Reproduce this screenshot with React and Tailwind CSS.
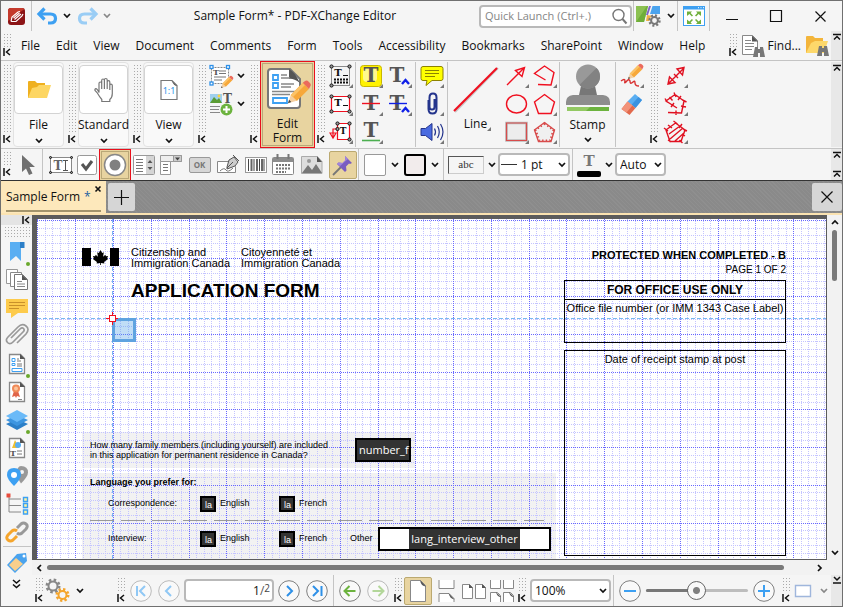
import { useState } from 'react';
import clsx from 'clsx';

const menus = ['File', 'Edit', 'View', 'Document', 'Comments', 'Form', 'Tools', 'Accessibility', 'Bookmarks', 'SharePoint', 'Window', 'Help'];

const Svg = ({ w = 24, h = w, vw = w, vh = h, children, className }) => (
    <svg width={w} height={h} viewBox={`0 0 ${vw} ${vh}`} fill="none" className={clsx('shrink-0 overflow-visible', className)} aria-hidden="true">{children}</svg>
);

const Chevron = ({ color = '#111', className }) => (
    <Svg w={8} h={6} className={className}><path d="M1 1l3 3 3-3" stroke={color} strokeWidth="1.7" /></Svg>
);

const Collapse = () => (
    <Svg w={8} h={8}><path d="M1 0v8M7 1L3.5 4 7 7" stroke="#111" strokeWidth="1.5" /></Svg>
);

// Drag handle with its collapse mark
const Grip = ({ className }) => (
    <div className={clsx('flex w-3 shrink-0 flex-col items-center self-stretch pb-1 pt-0.5', className)}>
        <div className="mb-px w-2 flex-1 bg-[radial-gradient(#aaa_0.8px,transparent_0.9px)] bg-[length:3px_3px]" />
        <Collapse />
    </div>
);

const Divider = () => <div className="w-px shrink-0 self-stretch bg-[#c4c4c4]" />;

// Narrow strip on the right end of every toolbar
const EndStrip = ({ children, className }) => (
    <div className={clsx('flex w-[11px] shrink-0 flex-col items-center self-stretch bg-[#e8e8e8]', className)}>{children}</div>
);
const UpMark = () => <Svg w={8} h={8}><path d="M0 1.5h8M1 6.5l3-3 3 3" stroke="#111" strokeWidth="1.5" /></Svg>;

const Tool = ({ label, className, children }) => (
    <button type="button" aria-label={label} className={clsx('flex shrink-0 items-center justify-center', className)}>{children}</button>
);

const Corner = () => <path d="M24 20v4h-4z" fill="#777" />;

const IconTool = ({ label, children, corner = true, className }) => (
    <Tool label={label} className={clsx('h-7', className)}>
        <Svg>{children}{corner && <Corner />}</Svg>
    </Tool>
);

const Pencil = ({ transform }) => (
    <g transform={transform}>
        <path d="M0 12l1.5-4.500 3.200 3.200z" fill="#f4cfa0" />
        <path d="M1.500 7.500L8 1l3.300 3.300-6.500 6.500z" fill="#f7a83a" />
        <path d="M1.500 7.500L8 1l1.200 1.200-6.500 6.500z" fill="#fbc368" />
        <path d="M8 1l1.200-1q1-.6 2 .4l.8.8q.8.900 0 1.800l-.7 1.300z" fill="#ec6a5c" />
        <path d="M0 12l.6-1.800 1.200 1.200z" fill="#444" />
    </g>
);

const BigT = ({ x = 12, y = 18, size = 20, color = '#555' }) => (
    <text x={x} y={y} fontSize={size} fontWeight="bold" fontFamily="DejaVu Serif, serif" textAnchor="middle" fill={color}>T</text>
);

const Handles = ({ pts, r = 1.6 }) => pts.map(([x, y]) => <circle key={`${x}-${y}`} cx={x} cy={y} r={r} fill="#999" stroke="#111" />);

const RibbonButton = ({ label, children }) => (
    <button type="button" className="mr-0.5 flex w-[51px] shrink-0 flex-col items-center self-stretch rounded-sm border border-[#e2e2e2] bg-[#f9f9f9] pt-0.5">
        <span className="flex h-[49px] w-[49px] items-center justify-center rounded-sm border border-[#d3d3d3] bg-white">{children}</span>
        <span className="mt-0.5 text-[12px] leading-[18px]">{label}</span>
        <Chevron className="mt-1" />
    </button>
);

const TitleBar = () => (
    <header className="flex h-[30px] shrink-0 items-center">
        <div className="flex w-[30px] justify-center">
            <Svg w={17}>
                <rect width="17" height="17" rx="3" fill="#8c1416" />
                <path d="M0 3q0-3 3-3h11q1.500 0 2.500 1L0 13z" fill="#c43a2c" />
                <path d="M3 13.500l1-4.500L10 4l2-.5M3 13.500h5l6-5.500 1-2" stroke="#fff" strokeWidth="1.200" />
                <path d="M5.500 10l6-5M6.500 11.500l6.500-5.500" stroke="#fff" strokeWidth="1.200" />
            </Svg>
        </div>
        <Divider />
        <Tool label="Undo" className="ml-[5px]">
            <Svg w={21} h={19}><path d="M7.500 1.500L2 7l5.500 5.500" stroke="#3da0f2" strokeWidth="3.200" /><path d="M3 7h10.500q5 0 5 4.500T13.500 16H11" stroke="#3da0f2" strokeWidth="3.200" /></Svg>
        </Tool>
        <Tool label="Undo list" className="ml-[5px]"><Chevron /></Tool>
        <Tool label="Redo" className="ml-1.5">
            <Svg w={21} h={19}><path d="M13.500 1.500L19 7l-5.500 5.500" stroke="#9acdf5" strokeWidth="3.200" /><path d="M18 7H7.500q-5 0-5 4.500T7.500 16H10" stroke="#9acdf5" strokeWidth="3.200" /></Svg>
        </Tool>
        <Tool label="Redo list" className="ml-[5px]"><Chevron color="#888" /></Tool>
        <h1 className="flex-1 text-center text-[12px] font-normal">Sample Form* - PDF-XChange Editor</h1>
        <label className="flex h-[23px] w-[153px] shrink-0 items-center rounded-sm border-2 border-[#b9b9b9] bg-white pl-1">
            <input type="text" aria-label="Quick Launch" placeholder="Quick Launch (Ctrl+.)" className="w-full min-w-0 flex-1 text-[11px] outline-none placeholder:text-[#858585]" />
            <Svg w={17} className="mr-0.5"><circle cx="7.500" cy="7" r="5.500" stroke="#777" strokeWidth="1.400" /><path d="M11.500 11l4 4.500" stroke="#777" strokeWidth="2" /></Svg>
        </label>
        <div className="ml-px flex self-stretch">
            <Divider />
            <Tool label="UI options" className="w-[43px] gap-1.5">
                <Svg w={25} h={22}>
                    <path d="M0 1h12l-4 16H0z" fill="#8cc152" /><path d="M0 17L11 1h1l-4 16z" fill="#70ae3a" />
                    <path d="M13 1h2l-3 9h-2z" fill="#8264c8" /><path d="M16.500 1H24v8H14z" fill="#4aa3ee" />
                    <path d="M11 10l6 1-1 5h-6z" fill="#f0b048" />
                    <circle cx="18.500" cy="15.500" r="5" fill="#f5f5f5" stroke="#777" strokeWidth="2.400" strokeDasharray="2 1.900" />
                    <circle cx="18.500" cy="15.500" r="3.400" stroke="#777" strokeWidth="2" />
                </Svg>
                <Chevron />
            </Tool>
            <Divider />
            <Tool label="Full screen" className="w-[31px]">
                <Svg w={22} h={20}>
                    <rect x=".5" y=".5" width="21" height="19" fill="#fff" stroke="#3da0f2" /><path d="M0 0h22v3.500H0z" fill="#3da0f2" />
                    <path d="M15 1.700h1M17.500 1.700h1M20 1.700h1" stroke="#fff" />
                    <path d="M4 5.500h5L7.600 7 10 9.400 8.900 10.500 6.400 8 4 10zM18 5.500h-5L14.400 7 12 9.400l1.100 1.100L15.600 8 18 10zM4 18h5l-1.400-1.500L10 14.100 8.900 13l-2.500 2.500L4 13.500zM18 18h-5l1.400-1.500-2.400-2.400 1.100-1.100 2.500 2.500 2.400-2z" fill="#70b03c" />
                </Svg>
            </Tool>
            <Divider />
        </div>
        <Tool label="Minimize" className="w-11"><Svg w={12}><path d="M0 9.500h12" stroke="#111" /></Svg></Tool>
        <Tool label="Maximize" className="w-11"><Svg w={12}><path d="M.5.500h11v11H.5z" stroke="#111" strokeWidth="1.200" /></Svg></Tool>
        <Tool label="Close" className="w-11"><Svg w={11}><path d="M.5.500l10 10M10.500.500l-10 10" stroke="#111" strokeWidth="1.200" /></Svg></Tool>
    </header>
);

const Binoculars = ({ transform }) => (
    <g transform={transform} fill="#777"><path d="M2 0h3v2h2V0h3l1 5 1 5H7V6H5v4H0l1-5z" /></g>
);

const MenuBar = () => (
    <div className="flex h-[30px] shrink-0 border-b border-[#c4c4c4]">
        <Grip />
        <nav className="ml-2 flex flex-1 items-center gap-4 text-[12px]">
            {menus.map((m) => <button key={m} type="button">{m}</button>)}
        </nav>
        <Grip />
        <button type="button" className="ml-0.5 flex items-center gap-[3px] text-[12px]">
            <Svg>
                <path d="M1.500 1.500h10l5 5v14h-15z" fill="#fff" stroke="#888" /><path d="M11 1.500l6 6h-6z" fill="#555" />
                <path d="M4 6.500h6M4 9.500h9M4 12.500h9M4 15.500h7" stroke="#888" /><Binoculars transform="translate(12 13)" />
            </Svg>
            Find...
        </button>
        <Tool label="Search" className="ml-1 mr-0.5">
            <Svg>
                <path d="M1 3q0-1 1-1h6l2 2h8v15H1z" fill="#f3b53b" /><path d="M6 9l4-2h13l-4 12H1z" fill="#fdd86b" /><Binoculars transform="translate(12 12)" />
            </Svg>
        </Tool>
        <EndStrip className="pt-0.5"><UpMark /></EndStrip>
    </div>
);

const Ribbon = () => (
    <div className="flex h-[88px] shrink-0 border-b border-[#c4c4c4] py-px">
        <Grip />
        <RibbonButton label="File">
            <Svg><path d="M1 4q0-1 1-1h6l2 2h8v4L8 20 1 20z" fill="#efb01f" /><path d="M5 10l5-1 2-2h12l-4 13H1z" fill="#fdd663" /></Svg>
        </RibbonButton>
        <Grip />
        <RibbonButton label="Standard">
            <Svg>
                <path d="M7 14.500V5.500q0-1.500 1.300-1.500t1.400 1.500V11 2.500Q9.700 1 11 1t1.400 1.500V11 2q0-1.500 1.400-1.500T15.200 2v9V4q0-1.400 1.300-1.400T17.800 4v8-4.500q0-1.300 1.200-1.300t1.300 1.300v8q0 4-2.500 6v2h-8v-2Q8 19.500 5 14.500L3 12.500Q2.500 11 4 10.700q1 0 3 3.800z" fill="#fff" stroke="#777" strokeWidth="1.200" />
            </Svg>
        </RibbonButton>
        <Grip />
        <RibbonButton label="View">
            <Svg><path d="M4 2.500h11l5 5v14H4z" stroke="#777" strokeWidth="1.200" /><path d="M14.500 2.500L20 8q-3 0-5.500-5.500z" fill="#555" /><text x="12" y="16" fontSize="9" textAnchor="middle" fill="#2d90e8" fontFamily="Noto Sans, sans-serif">1:1</text></Svg>
        </RibbonButton>
        <Grip />
        <div className="mr-0.5 flex w-[38px] shrink-0 flex-col">
            <Tool label="Edit text" className="h-7 gap-1">
                <Svg>
                    <path d="M2.500 3.500h17v16h-17z" fill="#fff" stroke="#888" strokeDasharray="2 1" />
                    <path d="M10 7h7M10 9.500h7M5 13h12M5 16h8" stroke="#777" /><BigT x={7} y={11} size={8} />
                    {[[2.5, 3], [19, 3], [2.5, 19.5]].map(([x, y]) => <rect key={x + y} x={x - 1.5} y={y - 1.5} width="3" height="3" fill="#fff" stroke="#2d90e8" strokeWidth="1.300" />)}
                    <Pencil transform="translate(12 12)" />
                </Svg>
                <Chevron />
            </Tool>
            <Tool label="Add content" className="h-7 gap-1">
                <Svg>
                    <path d="M1 2h12v9H1z" fill="#9fd0ee" /><path d="M1 11l4-6 3 3 2-2 3 5z" fill="#5a9c35" /><circle cx="10" cy="4" r="1.400" fill="#ffd33a" />
                    <BigT x={18.500} y={11} size={12} /><path d="M1 14.500h10M1 17.500h9M1 20.500h10" stroke="#888" />
                    <circle cx="17.500" cy="17.500" r="6" fill="#6cb33e" /><path d="M17.500 14v7M14 17.500h7" stroke="#fff" strokeWidth="2" />
                </Svg>
                <Chevron />
            </Tool>
        </div>
        <Grip />
        <button type="button" className="-my-px flex w-[55px] shrink-0 flex-col items-center border border-[#e8101c] bg-[#e8d4a0] pt-[5px] text-[12px] leading-[14px] outline -outline-offset-3 outline-[#b9a877]">
            <Svg w={46} h={46} className="ml-0.5">
                <path d="M2 5q0-3 3-3h19l10 10v26q0 3-3 3H5q-3 0-3-3z" fill="#fff" stroke="#777" strokeWidth="2" />
                <path d="M23 2q5 2 11 14-7-5-11-4z" fill="#555" />
                <path d="M7 8h5v5H7zM7 16h5v5H7zM7 31h14v5H7z" stroke="#3da0f2" strokeWidth="1.800" />
                <path d="M15 8h6M15 11h9M15 17h13M15 20h10M6 24.500h24M6 27.500h18" stroke="#888" strokeWidth="1.500" />
                <Pencil transform="translate(22 14) scale(1.850)" />
            </Svg>
            <span className="mt-1 block">Edit</span>
            <span className="block">Form</span>
        </button>
        <Grip />
        <div className="flex w-7 shrink-0 flex-col">
            <IconTool label="Text box">
                <rect x="2.500" y="2.500" width="18" height="19" stroke="#222" strokeDasharray="1 1" /><BigT x={9} y={12} size={10} color="#111" /><path d="M14 11.500h5" stroke="#111" />
                <path d="M5 15.500h14M5 18.500h14" stroke="#111" strokeWidth="2" strokeDasharray="2 1" /><Handles pts={[[2.5, 2.5], [20.5, 2.5], [2.5, 21.5]]} />
            </IconTool>
            <IconTool label="Typewriter">
                <path d="M2.500 4.500h18v15h-18z" fill="#fff" stroke="#f01020" strokeWidth="1.200" /><BigT x={9} y={14} size={10} color="#111" /><path d="M14 13.500h5" stroke="#111" />
                <Handles pts={[[2.5, 4.5], [20.5, 4.5], [2.5, 19.5], [20.5, 19.5]]} />
            </IconTool>
            <IconTool label="Callout">
                <path d="M8.500 3.500h12v16h-12z" fill="#fff" stroke="#f01020" strokeWidth="1.200" /><BigT x={14} y={14} size={9} color="#111" /><path d="M8 9H4v8M1 13l3 5 3-5z" stroke="#f01020" strokeWidth="1.200" />
                <Handles pts={[[8.5, 3.5], [20.5, 3.5], [8.5, 9], [20.5, 19.5]]} />
            </IconTool>
        </div>
        <Divider />
        <div className="grid w-[59px] shrink-0 grid-cols-2 content-start">
            <IconTool label="Highlight"><rect x="1.500" y="1.500" width="21" height="21" rx="3" fill="#fff200" stroke="#c9b800" /><rect x="4" y="4" width="14" height="14" rx="4" fill="#fff98c" /><BigT y={18} /></IconTool>
            <IconTool label="Replace text"><BigT x={9} /><path d="M14 20l3.500-4 3.500 4" stroke="#1020e8" strokeWidth="2.400" /></IconTool>
            <IconTool label="Strikeout"><BigT /><path d="M3 11.500h18" stroke="#f01020" strokeWidth="1.400" /></IconTool>
            <IconTool label="Insert text"><BigT x={9} /><path d="M1 11.500h18" stroke="#1020e8" strokeWidth="1.400" /><path d="M14 20l3.500-4 3.500 4" stroke="#1020e8" strokeWidth="2.400" /></IconTool>
            <IconTool label="Underline"><BigT y={17} /><path d="M3 20.500h18" stroke="#4caf50" strokeWidth="1.600" /></IconTool>
        </div>
        <Divider />
        <div className="flex w-[31px] shrink-0 flex-col">
            <IconTool label="Sticky note"><path d="M3 2.500h18q2 0 2 2v10q0 2-2 2H12l-6 5 1-5H3q-2 0-2-2v-10q0-2 2-2z" fill="#ffff00" stroke="#8d8200" /><path d="M5 6.500h14M5 9.500h14M5 12.500h10" stroke="#8d8200" /></IconTool>
            <IconTool label="File attachment"><path d="M8.500 8v9q0 4.500 4 4.500t4-4.500V5.500q0-4-3.500-4T9.500 5.500V15q0 2.500 2.500 2.500T14.500 15V7" stroke="#24348c" strokeWidth="2" /></IconTool>
            <IconTool label="Sound"><path d="M1 8.500h4.500l6.500-5v17l-6.500-5H1z" fill="#4a6be0" stroke="#24348c" /><path d="M14.500 8.500q2 3.500 0 7M17.500 6q3.500 6 0 12M20.500 4q5 8 0 16" stroke="#24348c" strokeWidth="1.200" /></IconTool>
        </div>
        <Divider />
        <button type="button" className="flex w-[55px] shrink-0 flex-col items-center text-[12px]">
            <Svg w={46} h={49} className="mt-0.5"><path d="M2 48L45 4" stroke="#c9c9c9" strokeWidth="2" /><path d="M1 47L44 4" stroke="#f01020" strokeWidth="2.200" /></Svg>
            <span className="mt-0.5 flex items-end pl-1 leading-[18px]">Line<Svg w={4} className="mb-0.5"><path d="M4 0v4H0z" fill="#777" /></Svg></span>
        </button>
        <div className="grid w-14 shrink-0 grid-cols-2 content-start">
            <IconTool label="Arrow"><path d="M2 21L19.500 3.500M10.500 6.500L19.500 3.500 17 12.500z" stroke="#f01020" strokeWidth="1.400" /></IconTool>
            <IconTool label="Polyline"><path d="M5 20.500l13 .500 3-12.500-9.500-6.500L1.500 9.500l11 6.500" stroke="#f01020" strokeWidth="1.400" /></IconTool>
            <IconTool label="Oval"><ellipse cx="11.500" cy="12" rx="10" ry="9" stroke="#f01020" strokeWidth="1.400" /></IconTool>
            <IconTool label="Polygon"><path d="M11.500 2.500L21.500 10l-3.500 11.500H5.500L1.500 10z" stroke="#f01020" strokeWidth="1.400" /></IconTool>
            <IconTool label="Rectangle"><path d="M1.500 3h20v17.500h-20z" fill="#ededed" stroke="#bbb" strokeWidth="2.600" /><path d="M1.500 3h20v17.500h-20z" stroke="#d84c4c" strokeWidth="1.200" /></IconTool>
            <IconTool label="Cloud">
                <path d="M11.500 2.500L21.500 10l-3.500 11.500H5.500L1.500 10z" fill="#f0f0f0" stroke="#d84c4c" strokeWidth="1.400" />
                <path d="M11.500 3.500L20.500 10l-3.300 10.500H6.300L2.500 10z" stroke="#d84c4c" strokeWidth="2.200" strokeDasharray="1.400 2.200" />
            </IconTool>
        </div>
        <Divider />
        <button type="button" className="flex w-[55px] shrink-0 flex-col items-center text-[12px]">
            <Svg w={44} h={48} className="mt-0.5">
                <path d="M15 22h14l2 9H13z" fill="#777" /><circle cx="22" cy="12.500" r="12" fill="#999" /><path d="M30.500 4a12 12 0 0 1-17 17z" fill="#828282" />
                <path d="M0 41v-3q0-6 7-7h30q7 1 7 7v3z" fill="#8d8d8d" /><path d="M1 43h42v4H1z" fill="#6cb33e" /><path d="M1 43h23l-4 4H1z" fill="#93c963" />
            </Svg>
            <span className="mt-1 leading-[18px]">Stamp</span>
            <Chevron className="mt-[3px]" />
        </button>
        <Divider />
        <div className="flex w-8 shrink-0 flex-col">
            <IconTool label="Pencil"><Pencil transform="translate(8 0) scale(1.250)" /><path d="M1 17q4-3 4 0-1 3 1 1 3-4 4-1 0 4 3 1 2-2 2 1t4 3" stroke="#d83030" strokeWidth="1.400" /></IconTool>
            <IconTool label="Eraser" corner={false}><path d="M15 2l7 6-6.500 8-8-6.500z" fill="#59aef2" /><path d="M18.500 5l3.500 3-6.500 8-4-3.200z" fill="#3a92e0" /><path d="M7.500 9.500l8 6.500-6 7L1.500 17z" fill="#e2694c" /><path d="M7.500 9.500l5 4-6 7-5-3.500z" fill="#f2937a" /></IconTool>
        </div>
        <Grip />
        <div className="ml-0.5 flex w-7 shrink-0 flex-col">
            <IconTool label="Distance"><path d="M4 20L20 4M13 5l7-1.500L18.500 11zM5.500 13L4 20l7-1.500zM10 10l4 4" stroke="#e01020" strokeWidth="1.400" /></IconTool>
            <IconTool label="Perimeter"><path d="M4 20.500l13.500.500 2.500-12-9-6.500L2 9l11 7M10 .500l2 4.500M18.500 8l4 2M1 6.500l2.500 4M5.500 5l3 3.500M14 8l3-4M17 14l5 1M12 18.500v4.500M7 15l3-4" stroke="#e01020" strokeWidth="1.400" /></IconTool>
            <IconTool label="Area"><path d="M11.500 3l9.500 7-4 11.500H6L2 10zM5 14l11-8M6 19L19 8M11 21l9-8M0 8l4 3M9.500 1l4 3M19 9l4 2M15.500 20l3 3M4 20l3 2M4 5l4 3M15 8l3-4M18 14l3 2" stroke="#e01020" strokeWidth="1.400" /></IconTool>
        </div>
        <div className="flex-1" />
        <EndStrip className="pt-0.5"><UpMark /></EndStrip>
    </div>
);

const SelectBox = ({ label, value, className, pad = 'pl-[3px]' }) => (
    <div className={clsx('relative flex h-[23px] shrink-0 items-center', className)}>
        <select aria-label={label} className={clsx('h-full w-full appearance-none rounded-sm border-2 border-[#b9b9b9] bg-white text-[12px] leading-none', pad)}>
            <option>{value}</option>
        </select>
        <Chevron className="pointer-events-none absolute right-1" />
    </div>
);

const FormToolbar = () => (
    <div className="flex h-[31px] shrink-0 items-center">
        <Grip />
        <Tool label="Select" className="w-[29px]"><Svg w={18} h={22}><path d="M3 1v17l4-3.500L10 21l3.500-1.500L10.500 13H16z" fill="#707070" /></Svg></Tool>
        <Divider />
        <div className="flex items-center pl-1">
            <Tool label="Text field" className="w-7">
                <Svg h={20}><rect x="1.500" y="2.500" width="21" height="15" fill="#fff" stroke="#888" /><BigT x={9} y={15} size={12} color="#666" /><path d="M14 5.500h5M14 15.500h5M16.500 5.500v10" stroke="#555" /><Handles pts={[[1.5, 2.5], [22.5, 2.5], [1.5, 17.5], [22.5, 17.5]]} r={1} /></Svg>
            </Tool>
            <Tool label="Check box" className="w-6">
                <Svg w={20}><rect x=".5" y=".5" width="19" height="19" rx="2" fill="#fff" stroke="#999" /><path d="M5 9l4 5 6-8" stroke="#555" strokeWidth="3" /></Svg>
            </Tool>
        </div>
        <Tool label="Radio button" className="h-8 w-8 border border-[#e8101c] bg-[#e8d4a0] outline -outline-offset-3 outline-[#b9a877]">
            <Svg w={24}><circle cx="12" cy="12" r="10.500" fill="#fff" stroke="#888" strokeWidth="1.500" /><circle cx="12" cy="12" r="5.500" fill="#808080" /></Svg>
        </Tool>
        <Tool label="List box" className="w-[26px]">
            <Svg w={22} h={20}><rect x=".5" y=".5" width="21" height="19" rx="1" fill="#fff" stroke="#999" /><path d="M13 1h8v18h-8z" fill="#d5d5d5" /><path d="M3 4.500h7M3 7.500h7M3 10.500h7M3 13.500h7M3 16.500h7" stroke="#777" /><path d="M14.500 8l2.500-3 2.500 3zM14.500 12l2.500 3 2.500-3z" fill="#555" /></Svg>
        </Tool>
        <Tool label="Dropdown" className="w-7">
            <Svg w={22} h={20}><path d="M.5.500h21v6H.5z" fill="#eee" stroke="#999" /><path d="M13.500.500h8v6h-8z" fill="#ccc" stroke="#999" /><path d="M15 2.500h5l-2.500 3z" fill="#444" /><path d="M.5 6.500h10v13H.5z" fill="#fff" stroke="#999" /><path d="M3 9.500h5M3 12.500h5M3 15.500h5" stroke="#777" /></Svg>
        </Tool>
        <Tool label="Button" className="w-[29px]">
            <span className="flex h-4 w-[22px] items-center justify-center rounded-xs border border-[#999] bg-[#d6d6d6] text-[8px] font-bold text-[#777]">OK</span>
        </Tool>
        <Tool label="Signature" className="w-7">
            <Svg h={22}><path d="M1.500 7.500h13l5 5v6h-18z" fill="#fff" stroke="#888" /><path d="M4 17q4-4 6-1t7-2" stroke="#777" /><path d="M11 13l2-7 5-3 4 5-3 4-8 3zM17 1l6 6" fill="#ccc" stroke="#555" /><path d="M11 14l6-6" stroke="#555" /></Svg>
        </Tool>
        <Tool label="Barcode" className="w-[27px]">
            <Svg w={22} h={18}><rect x=".5" y="1.500" width="21" height="15" fill="#fff" stroke="#999" /><path d="M3.500 3v12M9 3v12M14.500 3v12M19 3v12" stroke="#444" /><path d="M6.500 3v12M12 3v12M17 3v12" stroke="#666" strokeWidth="2" /></Svg>
        </Tool>
        <Tool label="Date" className="w-7">
            <Svg w={22}><rect x=".5" y="3.500" width="21" height="17" rx="1" fill="#fff" stroke="#888" /><path d="M1 4h20v4H1z" fill="#8c8c8c" /><path d="M5.500 0v5M16.500 0v5" stroke="#777" strokeWidth="2" /><path d="M4 11h14M4 14.500h14M4 18h10" stroke="#777" strokeWidth="2" strokeDasharray="2 1" /></Svg>
        </Tool>
        <Tool label="Image" className="w-[30px]">
            <Svg w={22} h={18}><path d="M.5.500H16l5 5v12H.5z" fill="#ddd" stroke="#aaa" /><path d="M1 17l6-8 4 5 4-6 6 9z" fill="#777" /><circle cx="8" cy="5" r="2" fill="#999" /><path d="M16 0l5 6h-5z" fill="#555" /></Svg>
        </Tool>
        <Tool label="Keep tool selected" className="ml-0.5 h-7 w-7 rounded-xs border border-[#bba970] bg-[#e8d4a0]">
            <Svg w={22}><path d="M1 21l8-8" stroke="#777" strokeWidth="1.800" /><path d="M13 2l7 7-2 1-1-.500-3 3 .500 4-1.500 1.500L5 10l1.500-1.500 4 .500 3-3L13 4z" fill="#7a5cc0" /><path d="M13 2l3 3-8 7-3-2 1.500-1.500 4 .500 3-3L13 4z" fill="#a184de" /></Svg>
        </Tool>
        <div className="ml-px flex items-center self-stretch">
            <Divider />
            <Tool label="Fill color" className="ml-[5px]"><span className="h-[22px] w-[22px] rounded-xs border border-[#999] bg-white" /></Tool>
            <Tool label="Fill color list" className="w-[18px]"><Chevron /></Tool>
            <Tool label="Stroke color"><span className="h-[22px] w-[22px] rounded-[3px] border-2 border-black bg-[#f2ecec]" /></Tool>
            <Tool label="Stroke color list" className="w-[17px]"><Chevron /></Tool>
            <Divider />
        </div>
        <Tool label="Border style" className="ml-1 gap-1">
            <span className="h-[18px] w-9 border border-t-[#555] border-r-[#ccc] border-b-[#ccc] border-l-[#555] text-center font-['Liberation_Serif',serif] text-[11px] leading-[15px] text-[#333]">abc</span>
            <Chevron />
        </Tool>
        <div className="relative ml-0.5 flex items-center">
            <SelectBox label="Line width" value="1 pt" pad="pl-[21px]" className="w-[72px]" />
            <span className="pointer-events-none absolute left-[3px] h-px w-4 bg-[#333]" />
        </div>
        <div className="ml-0.5 flex items-center self-stretch">
            <Divider />
            <Tool label="Text color" className="ml-1 gap-1">
                <Svg w={24} h={24}><BigT y={13} size={15} color="#777" /><rect y="18" width="24" height="6" rx="2" fill="#000" /></Svg>
                <Chevron />
            </Tool>
        </div>
        <SelectBox label="Font size" value="Auto" className="ml-0.5 w-[51px]" />
        <div className="flex-1" />
        <EndStrip className="justify-between py-0.5"><UpMark /><UpMark /></EndStrip>
    </div>
);

const TabStrip = () => (
    <div className="flex h-[35px] shrink-0 items-center border-t border-t-[#333] border-b-2 border-b-[#fbe3b1] bg-[#8a8a8a] bg-[repeating-linear-gradient(45deg,#8f8f8f_0_1px,transparent_1px_3px)]">
        <div className="relative flex h-full w-[105px] shrink-0 items-center bg-[#fde8bb] pl-[5px] text-[12px]">
            Sample Form <span className="ml-1 text-[#2060a0]">*</span>
            <Tool label="Close tab" className="absolute right-1 top-1"><Svg w={8}><path d="M1.500 1.500l5 5M6.500 1.500l-5 5" stroke="#111" strokeWidth="1.600" /></Svg></Tool>
            <span className="absolute inset-x-[5px] bottom-px h-0.5 bg-[#a3946c]" />
        </div>
        <Tool label="New tab" className="ml-0.5 h-7 w-[27px] rounded-xs bg-[#d6d6d6]"><Svg w={15}><path d="M7.500 0v15M0 7.500h15" stroke="#111" strokeWidth="1.200" /></Svg></Tool>
        <div className="flex-1" />
        <Tool label="Close document" className="h-7 w-[30px] rounded-xs bg-[#d6d6d6]"><Svg w={12}><path d="M.5.500l11 11M11.500.500l-11 11" stroke="#111" strokeWidth="1.200" /></Svg></Tool>
    </div>
);

const Paper = ({ children }) => (
    <><path d="M4.500 2.500h11l4 4v15h-15z" fill="#fff" stroke="#888" strokeWidth="1.300" /><path d="M15 2l5 5h-5z" fill="#555" />{children}</>
);

const panes = [
    { name: 'Bookmarks', dot: true, icon: <><path d="M5 2h14v6h-3v13l-5-5-6 5z" fill="#59aef2" /><path d="M15 2h4.500v6H15z" fill="#2c7fc8" /></> },
    { name: 'Thumbnails', icon: <><path d="M1.500 1.500h11v14h-11z" fill="#fff" stroke="#999" /><path d="M5.500 4.500h11v14h-11z" fill="#fff" stroke="#888" /><path d="M9.500 6.500h8l5 5v10h-13z" fill="#fff" stroke="#777" /><path d="M17 6.500l5.500 5.500h-5.500z" fill="#555" /><path d="M12 13.500h5M12 16h8M12 18.500h8" stroke="#888" /></> },
    { name: 'Comments', icon: <><path d="M1 3h22v14H13l-7 5v-5H1z" fill="#fdcb4c" /><path d="M4 6.500h16M4 9.500h16M4 12.500h10" stroke="#c9902a" /></> },
    { name: 'Attachments', icon: <path d="M6 14l9-9q2-2 3.500-.500t-.500 3.500L8 18q-3 3-5.500.500T3 13L13 3q4-4 8-1t0 8l-9 9" stroke="#999" strokeWidth="1.700" /> },
    { name: 'Fields', dot: true, icon: <Paper><path d="M7 6.500h3v3H7zM7 11.500h3v2H7zM7 16.500h10v3H7z" stroke="#3da0f2" /><path d="M12 7h2M12 9h4M12 12h5M12 14h5" stroke="#777" /></Paper> },
    { name: 'Signatures', icon: <Paper><path d="M9 11l-2 6 3-1 1 2 1-2 3 1-2-6z" fill="#e06448" /><circle cx="11" cy="8.500" r="4" fill="#f08a58" /><circle cx="11" cy="8.500" r="2" fill="#fbc49c" /><path d="M13 19.500h4" stroke="#888" /></Paper> },
    { name: 'Layers', dot: true, icon: <><path d="M1 16l11-5 11 5-11 6z" fill="#2c7fc8" /><path d="M1 12l11-5 11 5-11 6z" fill="#3d95e0" /><path d="M1 8l11-6 11 6-11 6z" fill="#6bbaf8" /></> },
    { name: 'Content', icon: <Paper><path d="M7 12l3-8 4 8z" fill="#f0c030" /><circle cx="13" cy="9" r="3" fill="#59aef2" /><BigT x={8} y={20} size={8} /><path d="M12 15h5M12 18h5" stroke="#777" /></Paper> },
    { name: 'Destinations', icon: <><path d="M16 2q7 0 7 6.500 0 4-7 11-4-6-4-11 0-6 4-6.500z" fill="#999" /><circle cx="17" cy="8" r="2" fill="#f5f5f5" /><path d="M9 4q7 0 7 7 0 4-7 11-7-7-7-11 0-7 7-7z" fill="#3da0f2" /><circle cx="9" cy="11" r="3" fill="#fff" /></> },
    { name: 'Structure', icon: <><path d="M4 3v17h12M4 7h12M4 13.500h12" stroke="#888" /><path d="M1.500 1.500h4v4h-4z" fill="#e84c3c" /><path d="M18.500 5.500h4v4h-4zM18.500 11.500h4v4h-4zM18.500 18h4v4h-4z" fill="#fff3a0" stroke="#3da0f2" strokeWidth="1.400" /></> },
    { name: 'Links', icon: <><path d="M12 8l4-4q2.500-2 5 0t0 5l-4 4q-2.500 2-5 0" stroke="#999" strokeWidth="3" /><path d="M12 11q-2.500-2-5 0l-4 4q-2.500 3 0 5t5 0l4-4" stroke="#f5a52c" strokeWidth="3" /></> },
];

const SidePanes = () => (
    <aside className="flex w-[31px] shrink-0 flex-col items-center">
        <div className="flex h-2.5 w-full items-center justify-end bg-[#e4e4e4] pr-0.5"><Collapse /></div>
        <div className="mt-px h-3 w-[26px] shrink-0 bg-[radial-gradient(#aaa_0.8px,transparent_0.9px)] bg-[length:3px_3px]" />
        {panes.map((p) => (
            <Tool key={p.name} label={p.name} className="relative h-7 w-full">
                <Svg>{p.icon}</Svg>
                {p.dot && <span className="absolute bottom-0 right-0.5 h-1 w-1 rounded-full bg-[#6aa82c]" />}
            </Tool>
        ))}
        <div className="h-px w-7 shrink-0 bg-[#c4c4c4]" />
        <Tool label="Properties" className="mt-0.5 h-7">
            <Svg><path d="M12 3l9-1 1 8L10 22l-8-8z" fill="#4aa3ee" /><path d="M11 7l7 6-8 7-6-6z" fill="#f8cf8c" /><circle cx="19" cy="5" r="1.500" fill="#fff" /></Svg>
        </Tool>
        <Tool label="More panes" className="mt-0.5"><Svg w={9} h={10}><path d="M1 1l3.500 3L8 1M1 5.500l3.500 3 3.500-3" stroke="#111" strokeWidth="1.600" /></Svg></Tool>
    </aside>
);

// Snap grid, 7.56px cells with every fifth line strong
const GRID = 7.56;
const minor = Array.from({ length: 260 }, (_, i) => i).filter((i) => i % 5 !== 0);
const major = Array.from({ length: 52 }, (_, i) => i * 5);

const gridPath = (steps) => steps.map((i) => {
    const x = Math.round(0.3 + i * GRID) + 0.5;
    const y = Math.round(1.3 + i * GRID) + 0.5;
    return `M${x} 0V2000M0 ${y}H2000`;
}).join('');

const SnapGrid = () => (
    <svg className="pointer-events-none absolute inset-0 h-full w-full" fill="none" aria-hidden="true">
        <path d={gridPath(minor)} stroke="#c4c4ff" strokeDasharray="1 1" shapeRendering="crispEdges" />
        <path d={gridPath(major)} stroke="#6868ff" strokeDasharray="1 1" shapeRendering="crispEdges" />
    </svg>
);

// Guides and the field being placed under the cursor
const Guides = () => (
    <svg className="pointer-events-none absolute inset-0 h-full w-full" aria-hidden="true">
        <g stroke="#7ab8f0" strokeDasharray="4 2">
            <line x1="75.500" y1="0" x2="75.500" y2="2000" />
            <line x1="0" y1="99.500" x2="2000" y2="99.500" />
        </g>
        <rect x="76.500" y="100.500" width="21" height="21" fill="#4a9fe5" fillOpacity="0.350" stroke="#5fa3e0" strokeWidth="3" />
        <path d="M69 99.500h12M75.500 93v13" stroke="#f01020" /><rect x="72.500" y="96.500" width="6" height="6" fill="#fff" stroke="#f01020" />
    </svg>
);

const RadioField = ({ label }) => (
    <span className="flex w-[79px] items-center gap-1">
        <span className="flex h-4 w-4 shrink-0 items-end border-2 border-black bg-[#333] pl-[3px] text-[9px] leading-[9px] text-white">la</span>
        {label}
    </span>
);

// Shaded panels stay under the snap grid, everything marked z-10 is printed over it
const Document = () => (
    <article className="relative flex flex-1 overflow-hidden bg-white pl-[45px] pr-10 font-['Liberation_Sans',sans-serif] text-black">
        <div className="flex min-w-0 flex-1 flex-col">
            <div className="relative z-10 mt-7 flex text-[11px] leading-[11px]">
                <Svg w={37} h={19} className="mt-px">
                    <path d="M0 0h9v18H0zM28 0h9v18h-9z" fill="#000" />
                    <path d="M18.500 2l1.700 3 1.600-.8-.7 4.500 2.200-2 .6 1.500 2.200-.3-1 2.300 1 .8-4 3 .3 1.500-3.500-.5V17h-.8v-2l-3.500.500.300-1.500-4-3 1-.8-1-2.300 2.200.3.600-1.500 2.200 2-.7-4.500 1.600.8z" fill="#000" />
                </Svg>
                <p className="ml-3 w-[110px]">Citizenship and<br />Immigration Canada</p>
                <p>Citoyenneté et<br />Immigration Canada</p>
            </div>
            <h2 className="relative z-10 ml-[49px] mt-2.5 text-[19px] font-bold leading-6">APPLICATION FORM</h2>
            <div className="mt-[129px] flex bg-[linear-gradient(90deg,#f2f2f2_333px,transparent_333px)]">
                <p className="relative z-10 w-[253px] shrink-0 py-2 pl-2 text-[9px] leading-[10px] whitespace-nowrap">How many family members (including yourself) are included<br />in this application for permanent residence in Canada?</p>
                <span className="relative z-10 ml-5 mt-1.5 h-6 w-14 border-2 border-black bg-[#333] pl-0.5 font-['Open_Sans',sans-serif] text-[11px] leading-5 text-white">number_f</span>
            </div>
            <div className="mr-2 mt-[5px] flex-1 bg-[#f2f2f2] pl-2 text-[9px]">
                <div className="relative z-10">
                    <p className="pt-[3px] font-bold leading-3">Language you prefer for:</p>
                    <div className="mt-1 flex h-6 items-center pl-[18px]">
                        <span className="w-[92px]">Correspondence:</span>
                        <RadioField label="English" />
                        <RadioField label="French" />
                    </div>
                    <div className="mr-3 mt-1 h-px bg-[repeating-linear-gradient(90deg,#999_0_24px,transparent_24px_31px)]" />
                    <div className="mt-1.5 flex h-6 items-center pl-[18px]">
                        <span className="w-[92px]">Interview:</span>
                        <RadioField label="English" />
                        <RadioField label="French" />
                        <span className="-ml-2 w-7">Other</span>
                        <span className="flex h-6 w-[173px] justify-center border-2 border-black bg-white font-['Open_Sans',sans-serif] text-[11px] leading-5 text-white">
                            <span className="bg-[#333] px-0.5">lang_interview_other</span>
                        </span>
                    </div>
                </div>
            </div>
        </div>
        <div className="relative z-10 flex w-[222px] shrink-0 flex-col pt-7 text-center text-[11px]">
            <p className="self-end font-bold leading-4 whitespace-nowrap">PROTECTED WHEN COMPLETED - B</p>
            <p className="text-right text-[10px] leading-[14px]">PAGE 1 OF 2</p>
            <div className="mt-[3px] h-[63px] border border-black">
                <h3 className="border-b border-black text-[12px] font-bold leading-[18px]">FOR OFFICE USE ONLY</h3>
                <p className="leading-4 whitespace-nowrap">Office file number (or IMM 1343 Case Label)</p>
            </div>
            <div className="mb-[3px] mt-[7px] flex-1 border border-black leading-4">Date of receipt stamp at post</div>
        </div>
        <SnapGrid />
        <Guides />
    </article>
);

const Round = ({ label, color, muted, d }) => (
    <Tool label={label} className="w-7">
        <Svg w={22}><circle cx="11" cy="11" r="10.300" fill="#f9f9f9" stroke={muted ? '#bbb' : '#808080'} /><path d={d} stroke={color} strokeWidth="2" /></Svg>
    </Tool>
);

const StatusBar = () => {
    const [page, setPage] = useState('1');
    const [zoom, setZoom] = useState(49);

    return (
        <footer className="flex h-[31px] shrink-0 items-center bg-[#f5f5f5] pl-px">
            <Grip />
            <Tool label="Options" className="w-[39px] gap-1.5">
                <Svg w={25}>
                    <circle cx="8" cy="8" r="6" stroke="#888" strokeWidth="3" strokeDasharray="2.400 2.300" /><circle cx="8" cy="8" r="4.500" stroke="#888" strokeWidth="2" />
                    <circle cx="17.500" cy="17" r="5.500" stroke="#f5a52c" strokeWidth="3" strokeDasharray="2.200 2.100" /><circle cx="17.500" cy="17" r="4" stroke="#f5a52c" strokeWidth="2" />
                </Svg>
                <Chevron />
            </Tool>
            <Grip className="ml-[31px]" />
            <Round label="First page" color="#90c8f5" muted d="M7 6v10M15 6l-5 5 5 5" />
            <Round label="Previous page" color="#90c8f5" muted d="M13 6l-5 5 5 5" />
            <label className="ml-px flex h-[23px] w-[90px] shrink-0 items-center rounded-sm border-2 border-[#b9b9b9] bg-white pr-0.5 text-[12px]">
                <input type="text" aria-label="Page" value={page} onChange={(e) => setPage(e.target.value)} className="w-full min-w-0 flex-1 text-right outline-none" />
                <span className="text-[#555]">/</span><span className="mb-1 text-[10px] text-[#444]">2</span>
            </label>
            <div className="ml-px flex"><Round label="Next page" color="#2d90e8" d="M9 6l5 5-5 5" /></div>
            <Round label="Last page" color="#2d90e8" d="M7 6l5 5-5 5M15.500 6v10" />
            <div className="mx-0.5 flex items-center self-stretch"><Divider /></div>
            <Round label="Back" color="#6cb33e" d="M16.500 11H6M10.500 6l-5 5 5 5" />
            <Round label="Forward" color="#b3d79a" muted d="M5.500 11H16M11.500 6l5 5-5 5" />
            <Grip />
            <Tool label="Single page" className="h-7 w-7 rounded-xs border border-[#bba970] bg-[#e8d4a0]"><Svg w={18} h={22}><path d="M1.500.500h10l5 5v16h-15z" fill="#fff" stroke="#888" /><path d="M11 0l6 6.500q-5 0-6-6.500z" fill="#555" /></Svg></Tool>
            <Tool label="Continuous" className="w-7"><Svg w={17} h={22}><path d="M1 0v8.500h15V0M1 22v-8.500h10l5 5V22" fill="#fff" stroke="#888" /><path d="M10.500 13l6 6.500q-5-1-6-6.500z" fill="#555" /></Svg></Tool>
            <Tool label="Two pages" className="w-7"><Svg w={25} h={18}><path d="M.5 2.500h7l3 3v11H.5zM13.500 2.500h7l3 3v11h-10z" fill="#fff" stroke="#888" /><path d="M7 2l4 4H7zM20 2l4 4h-4z" fill="#555" /></Svg></Tool>
            <Tool label="Two pages continuous" className="w-7"><Svg w={24} h={22}><path d="M.5 0v8.500h10V0M13.500 0v8.500h10V0M.5 22v-9.500h7l3 3V22M13.500 22v-9.500h7l3 3V22" fill="#fff" stroke="#888" /><path d="M6 12l5 5q-4 0-5-5zM19 12l5 5q-4 0-5-5z" fill="#555" /></Svg></Tool>
            <Grip />
            <SelectBox label="Zoom" value="100%" className="ml-0.5 w-[81px]" />
            <div className="ml-0.5 flex items-center self-stretch"><Divider /></div>
            <div className="flex min-w-0 flex-1 items-center pl-0.5">
                <Round label="Zoom out" color="#3da0f2" d="M5 11h12" />
                <div className="relative flex min-w-[60px] flex-1 items-center px-0.5">
                    <div className="flex h-[3px] w-full rounded bg-[#bdbdbd]"><div className="rounded bg-[#777]" style={{ width: `${zoom}%` }} /></div>
                    <input type="range" aria-label="Zoom level" value={zoom} onChange={(e) => setZoom(Number(e.target.value))} className="absolute inset-0 w-full appearance-none bg-transparent [&::-webkit-slider-thumb]:h-[19px] [&::-webkit-slider-thumb]:w-[19px] [&::-webkit-slider-thumb]:appearance-none [&::-webkit-slider-thumb]:rounded-full [&::-webkit-slider-thumb]:border [&::-webkit-slider-thumb]:border-[#666] [&::-webkit-slider-thumb]:bg-[radial-gradient(#808080_3px,#f9f9f9_4px)]" />
                </div>
                <Round label="Zoom in" color="#3da0f2" d="M5 11h12M11 5v12" />
            </div>
            <Grip className="ml-0.5" />
            <Tool label="View mode" className="w-[38px] gap-2"><Svg w={18} h={14}><path d="M1.500 1.500h15v11h-15z" fill="#fff" stroke="#9fb6dc" strokeWidth="1.400" /></Svg><Chevron color="#888" /></Tool>
            <EndStrip className="ml-px pt-px"><Svg w={8} h={8}><path d="M1 1l3 3 3-3M0 7h8" stroke="#111" strokeWidth="1.500" /></Svg></EndStrip>
        </footer>
    );
};

const App = () => (
    <div className="flex h-screen min-w-[830px] flex-col overflow-hidden border border-[#707070] bg-[#f5f5f5] font-['Open_Sans',sans-serif] text-[#111]">
        <TitleBar />
        <MenuBar />
        <Ribbon />
        <FormToolbar />
        <TabStrip />
        <div className="flex min-h-0 flex-1">
            <SidePanes />
            <main className="flex min-w-0 flex-1 flex-col">
                <div className="flex min-h-0 flex-1">
                    <div className="flex min-w-0 flex-1 border-t-4 border-r border-b border-l-[5px] border-[#5c5c5c]">
                        <Document />
                    </div>
                    <div className="flex w-[15px] shrink-0 flex-col items-center bg-[#f2f2f2] py-1">
                        <Chevron className="rotate-180" />
                        <div className="mt-[5px] h-[51px] w-[5px] rounded bg-[#7a7a7a]" />
                        <div className="flex-1" />
                        <Chevron />
                    </div>
                </div>
                <div className="flex h-[15px] shrink-0 items-center bg-[#f2f2f2] pl-[3px] pr-[18px]">
                    <Chevron className="rotate-90" />
                    <div className="ml-1 mr-8 h-[5px] flex-1 rounded bg-[#7a7a7a]" />
                    <Chevron className="-rotate-90" />
                </div>
                <StatusBar />
            </main>
        </div>
    </div>
);

export default App;
